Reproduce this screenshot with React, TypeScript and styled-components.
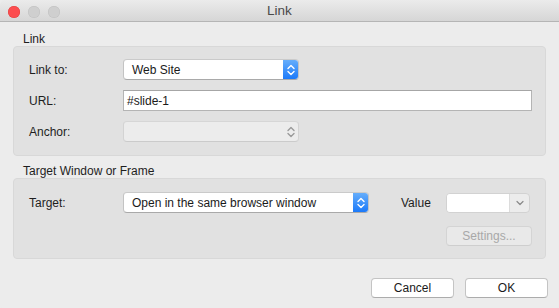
import styled, { createGlobalStyle } from "styled-components";

const GlobalStyle = createGlobalStyle`
  html, body {
    margin: 0;
    padding: 0;
    background: #ececec;
  }
  body {
    font-family: "Liberation Sans", Arial, sans-serif;
    font-size: 12px;
    color: #1a1a1a;
  }
`;

const Window = styled.div`
  width: 559px;
  height: 308px;
  background: #ececec;
  display: flex;
  flex-direction: column;
  overflow: hidden;
  border-radius: 5px 5px 4px 4px;
`;

const TitleBar = styled.div`
  flex-shrink: 0;
  height: 21px;
  border-bottom: 1px solid #b5b5b5;
  background: linear-gradient(#ebebeb, #d6d6d6);
  display: flex;
  align-items: center;
  position: relative;
`;

const Lights = styled.div`
  display: flex;
  gap: 8px;
  padding-left: 8px;
  padding-top: 2px;
`;

const Light = styled.span<{ $red?: boolean }>`
  width: 12px;
  height: 12px;
  border-radius: 50%;
  background: ${(p) => (p.$red ? "#fc4d4f" : "#cfcfcf")};
  box-shadow: inset 0 0 0 0.5px ${(p) => (p.$red ? "#e0403f" : "#c0c0c0")};
`;

const Title = styled.div`
  position: absolute;
  left: 0;
  right: 0;
  top: 3px;
  text-align: center;
  font-size: 13.5px;
  color: #4a4a4a;
  pointer-events: none;
`;

const Body = styled.div`
  flex: 1;
  display: flex;
  flex-direction: column;
  padding: 0 13px 0 13px;
`;

const SectionLabel = styled.div<{ $top: number }>`
  flex-shrink: 0;
  margin-top: ${(p) => p.$top}px;
  padding-left: 10px;
  height: 14px;
  line-height: 14px;
  color: #1e1e1e;
`;

const Panel = styled.div<{ $height: number; $padTop: number }>`
  flex-shrink: 0;
  height: ${(p) => p.$height}px;
  box-sizing: border-box;
  background: #e1e1e1;
  border: 1px solid #d8d8d8;
  border-radius: 4px;
  padding: ${(p) => p.$padTop}px 13px 0 15px;
  display: flex;
  flex-direction: column;
`;

const Row = styled.div<{ $h: number }>`
  height: ${(p) => p.$h}px;
  display: flex;
  align-items: center;
`;

const Label = styled.div`
  width: 94px;
  flex-shrink: 0;
  color: #1e1e1e;
`;

const SelectBox = styled.div<{ $w: number; $disabled?: boolean }>`
  width: ${(p) => p.$w}px;
  height: 21px;
  box-sizing: border-box;
  display: flex;
  align-items: stretch;
  border-radius: 4px;
  border: 1px solid ${(p) => (p.$disabled ? "#d3d3d3" : "#c3c3c3")};
  border-top-color: ${(p) => (p.$disabled ? "#d6d6d6" : "#cacaca")};
  border-bottom-color: ${(p) => (p.$disabled ? "#cbcbcb" : "#a9a9a9")};
  background: ${(p) => (p.$disabled ? "#ececec" : "#ffffff")};
  overflow: hidden;
`;

const SelectText = styled.div`
  flex: 1;
  padding-left: 8px;
  display: flex;
  align-items: center;
  color: #1a1a1a;
  white-space: nowrap;
`;

const Stepper = styled.div<{ $blue?: boolean }>`
  width: 16px;
  display: flex;
  align-items: center;
  justify-content: center;
  background: ${(p) =>
    p.$blue ? "linear-gradient(#69b0fb, #1877f9)" : "transparent"};
  margin: -1px -1px -1px 0;
  border-radius: 0 4px 4px 0;
`;

const TextInput = styled.div`
  flex: 1;
  height: 21px;
  box-sizing: border-box;
  border: 1px solid #b4b4b4;
  border-top-color: #a6a6a6;
  background: #ffffff;
  padding-left: 3px;
  display: flex;
  align-items: center;
  color: #1a1a1a;
`;

const ValueLabel = styled.div`
  margin-left: 32px;
  width: 45px;
  color: #1e1e1e;
`;

const Combo = styled.div`
  width: 84px;
  height: 20px;
  box-sizing: border-box;
  border: 1px solid #d2d2d2;
  border-radius: 4px;
  background: #ececec;
  display: flex;
  overflow: hidden;
`;

const ComboField = styled.div`
  flex: 1;
  background: #ffffff;
  border-right: 1px solid #dcdcdc;
`;

const ComboArrow = styled.div`
  width: 19px;
  display: flex;
  align-items: center;
  justify-content: center;
`;

const Button = styled.button<{ $w: number; $disabled?: boolean }>`
  width: ${(p) => p.$w}px;
  height: 20px;
  box-sizing: border-box;
  border-radius: 4px;
  border: 1px solid ${(p) => (p.$disabled ? "#d4d4d4" : "#c4c4c4")};
  border-bottom-color: ${(p) => (p.$disabled ? "#cecece" : "#acacac")};
  background: ${(p) => (p.$disabled ? "#e9e9e9" : "#ffffff")};
  color: ${(p) => (p.$disabled ? "#a8a8a8" : "#1a1a1a")};
  font-family: inherit;
  font-size: 12px;
  padding: 0;
  display: flex;
  align-items: center;
  justify-content: center;
`;

const SettingsRow = styled.div`
  display: flex;
  justify-content: flex-end;
  margin-top: 13px;
`;

const Footer = styled.div`
  flex-shrink: 0;
  margin-top: 19px;
  display: flex;
  justify-content: flex-end;
  gap: 11px;
  margin-right: -2px;
`;

function UpDown({ color }: { color: string }) {
  return (
    <svg width="8" height="12" viewBox="0 0 8 12">
      <path
        d="M1 4.5 L4 1.5 L7 4.5 M1 7.5 L4 10.5 L7 7.5"
        fill="none"
        stroke={color}
        strokeWidth="1.4"
        strokeLinecap="round"
        strokeLinejoin="round"
      />
    </svg>
  );
}

function Down() {
  return (
    <svg width="8" height="6" viewBox="0 0 8 6">
      <path
        d="M1 1.5 L4 4.5 L7 1.5"
        fill="none"
        stroke="#8a8a8a"
        strokeWidth="1.2"
        strokeLinecap="round"
        strokeLinejoin="round"
      />
    </svg>
  );
}

export default function App() {
  return (
    <>
      <GlobalStyle />
      <Window>
        <TitleBar>
          <Lights>
            <Light $red />
            <Light />
            <Light />
          </Lights>
          <Title>Link</Title>
        </TitleBar>
        <Body>
          <SectionLabel $top={10}>Link</SectionLabel>
          <Panel $height={110} $padTop={7}>
            <Row $h={31}>
              <Label>Link to:</Label>
              <SelectBox $w={176}>
                <SelectText>Web Site</SelectText>
                <Stepper $blue>
                  <UpDown color="#ffffff" />
                </Stepper>
              </SelectBox>
            </Row>
            <Row $h={31}>
              <Label>URL:</Label>
              <TextInput>#slide-1</TextInput>
            </Row>
            <Row $h={31}>
              <Label>Anchor:</Label>
              <SelectBox $w={176} $disabled>
                <SelectText />
                <Stepper>
                  <UpDown color="#9a9a9a" />
                </Stepper>
              </SelectBox>
            </Row>
          </Panel>
          <SectionLabel $top={8}>Target Window or Frame</SectionLabel>
          <Panel $height={81} $padTop={13}>
            <Row $h={21}>
              <Label>Target:</Label>
              <SelectBox $w={246}>
                <SelectText>Open in the same browser window</SelectText>
                <Stepper $blue>
                  <UpDown color="#ffffff" />
                </Stepper>
              </SelectBox>
              <ValueLabel>Value</ValueLabel>
              <Combo>
                <ComboField />
                <ComboArrow>
                  <Down />
                </ComboArrow>
              </Combo>
            </Row>
            <SettingsRow>
              <Button $w={86} $disabled>
                Settings...
              </Button>
            </SettingsRow>
          </Panel>
          <Footer>
            <Button $w={83}>Cancel</Button>
            <Button $w={83}>OK</Button>
          </Footer>
        </Body>
      </Window>
    </>
  );
}
